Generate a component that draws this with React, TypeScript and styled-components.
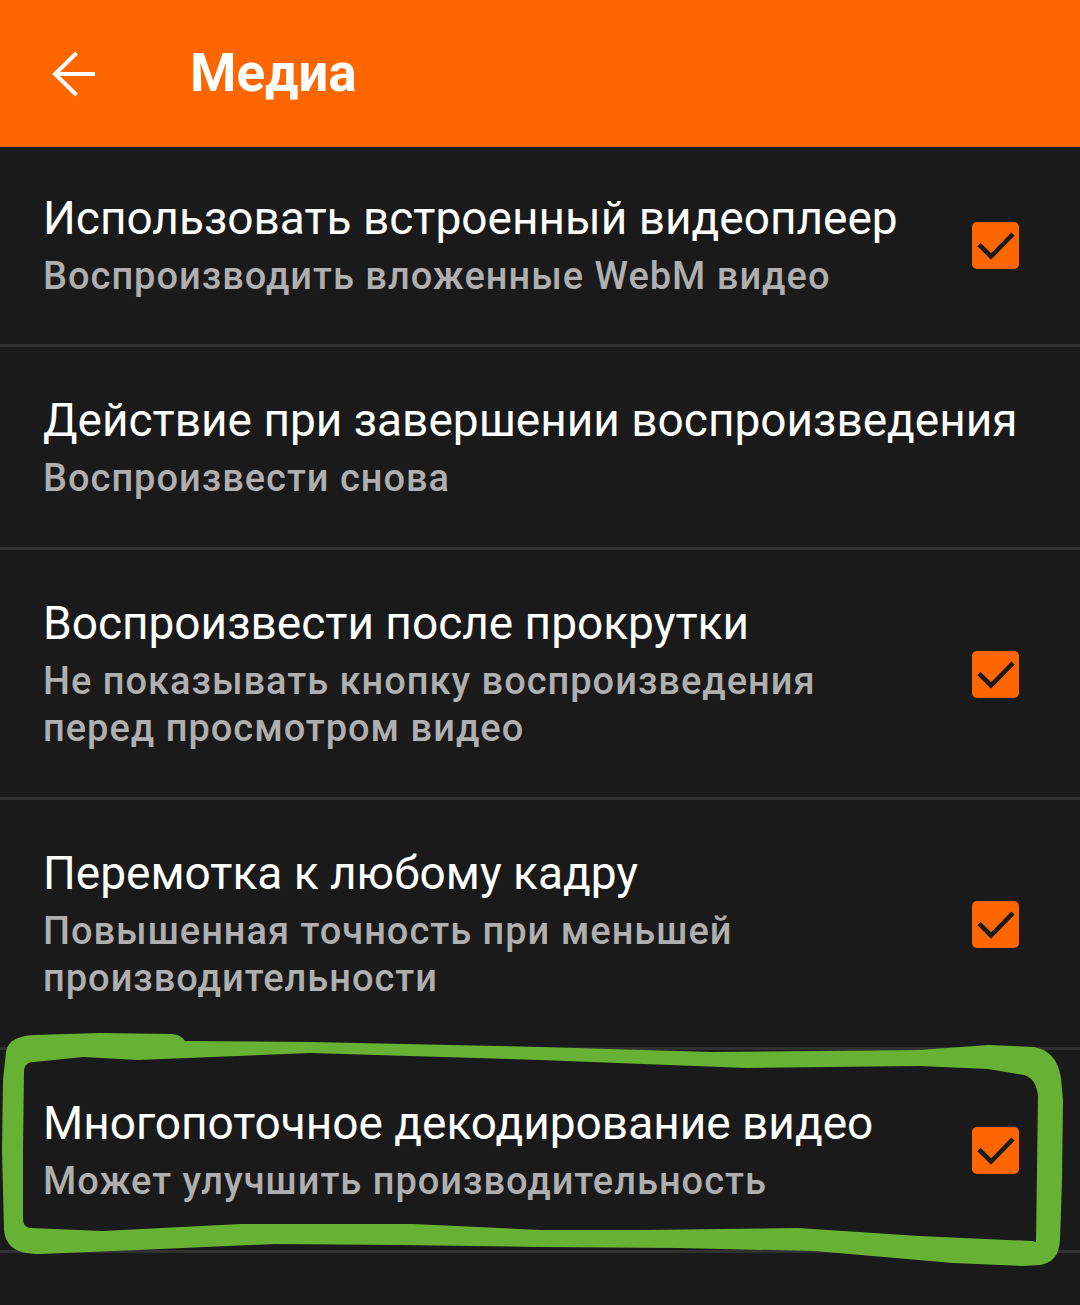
import React from "react";
import styled, { createGlobalStyle } from "styled-components";

const GlobalStyle = createGlobalStyle`
  html, body {
    margin: 0;
    padding: 0;
    background: #1a1a1a;
  }
  body {
    font-family: Roboto, "Noto Sans", "Liberation Sans", sans-serif;
    -webkit-font-smoothing: antialiased;
  }
`;

const Page = styled.div`
  position: relative;
  width: 1080px;
  min-height: 1305px;
  background: #1a1a1a;
  overflow: hidden;
`;

const Toolbar = styled.header`
  display: flex;
  align-items: center;
  height: 147px;
  padding-left: 50px;
  box-sizing: border-box;
  background: #ff6600;
`;

const BackButton = styled.button`
  display: flex;
  align-items: center;
  justify-content: center;
  width: 46px;
  height: 46px;
  padding: 0;
  border: none;
  background: transparent;
  color: #ffffff;
  cursor: pointer;
`;

const ToolbarTitle = styled.h1`
  margin: 0 0 0 94px;
  font-family: Roboto, "Noto Sans", sans-serif;
  font-weight: 700;
  font-size: 53px;
  line-height: 1;
  color: #ffffff;
`;

const List = styled.div`
  display: flex;
  flex-direction: column;
`;

const PrefRow = styled.div`
  display: flex;
  align-items: center;
  padding: 46px 40px 45px 43px;
  border-bottom: 3px solid #303030;

  &:first-child {
    padding-top: 44px;
    padding-bottom: 44px;
  }
`;

const TextCol = styled.div`
  flex: 1;
  min-width: 0;
  display: flex;
  flex-direction: column;
`;

const PrefTitle = styled.div`
  font-size: 46px;
  line-height: 54px;
  color: #ffffff;
  font-weight: 400;
`;

const PrefSummary = styled.div`
  margin-top: 8px;
  font-size: 38px;
  font-weight: 500;
  letter-spacing: 1px;
  line-height: 47px;
  color: #afafaf;
`;

const CheckFrame = styled.div`
  flex: none;
  margin-left: 60px;
  margin-right: 21px;
  width: 47px;
  height: 47px;
  border-radius: 5px;
  background: #ff6600;
  display: flex;
  align-items: center;
  justify-content: center;
`;

const Annotation = styled.svg`
  position: absolute;
  left: 0;
  top: 0;
  width: 1080px;
  height: 1305px;
  pointer-events: none;
`;

const BackArrow = () => (
  <svg width="46" height="46" viewBox="0 0 46 46" fill="none">
    <path
      d="M45 23H5 M26.5 2 L5 23 L26.5 44"
      stroke="#ffffff"
      strokeWidth="4"
      strokeLinecap="butt"
      strokeLinejoin="miter"
    />
  </svg>
);

const CheckMark = () => (
  <svg width="47" height="47" viewBox="0 0 47 47" fill="none">
    <polyline
      points="7,22.5 19,34.5 41,12"
      stroke="#1a1a1a"
      strokeWidth="4.6"
      strokeLinecap="butt"
      strokeLinejoin="miter"
    />
  </svg>
);

type Pref = { title: string; summary: string[]; checked?: boolean };

const prefs: Pref[] = [
  {
    title: "Использовать встроенный видеоплеер",
    summary: ["Воспроизводить вложенные WebM видео"],
    checked: true,
  },
  {
    title: "Действие при завершении воспроизведения",
    summary: ["Воспроизвести снова"],
  },
  {
    title: "Воспроизвести после прокрутки",
    summary: ["Не показывать кнопку воспроизведения", "перед просмотром видео"],
    checked: true,
  },
  {
    title: "Перемотка к любому кадру",
    summary: ["Повышенная точность при меньшей", "производительности"],
    checked: true,
  },
  {
    title: "Многопоточное декодирование видео",
    summary: ["Может улучшить производительность"],
    checked: true,
  },
];

const outer =
  "M6 1052 C8 1040 18 1036 34 1035 L100 1033 L172 1034 C180 1035 183 1038 185 1041 L310 1042 L540 1047 L712 1052 L919 1050 L988 1045 L1034 1047 C1050 1050 1058 1060 1061 1078 L1063 1100 L1062 1180 L1060 1240 C1059 1256 1052 1263 1040 1265 L1022 1266 L953 1263 L815 1251 L678 1248 L540 1247 L400 1245 L275 1244 L138 1250 L40 1254 C18 1254 6 1248 4 1230 L2 1150 L3 1080 Z";
const inner =
  "M24 1072 C24 1065 28 1062 34 1062 L83 1057 L138 1060 L310 1053 L540 1060 L747 1068 L919 1066 L988 1069 L1024 1075 C1033 1078 1037 1085 1038 1096 L1037 1170 L1036 1242 L1032 1241 L919 1236 L798 1228 L643 1230 L540 1230 L413 1224 L241 1224 L103 1231 L30 1228 C25 1227 23 1224 23 1218 L23 1150 Z";

export default function App() {
  return (
    <Page>
      <GlobalStyle />
      <Toolbar>
        <BackButton aria-label="Назад">
          <BackArrow />
        </BackButton>
        <ToolbarTitle>Медиа</ToolbarTitle>
      </Toolbar>
      <List>
        {prefs.map((p) => (
          <PrefRow key={p.title}>
            <TextCol>
              <PrefTitle>{p.title}</PrefTitle>
              <PrefSummary>
                {p.summary.map((line, i) => (
                  <React.Fragment key={i}>
                    {i > 0 && <br />}
                    {line}
                  </React.Fragment>
                ))}
              </PrefSummary>
            </TextCol>
            {p.checked && (
              <CheckFrame>
                <CheckMark />
              </CheckFrame>
            )}
          </PrefRow>
        ))}
      </List>
      <Annotation viewBox="0 0 1080 1305">
        <path d={`${outer} ${inner}`} fill="#67b234" fillRule="evenodd" />
      </Annotation>
    </Page>
  );
}
